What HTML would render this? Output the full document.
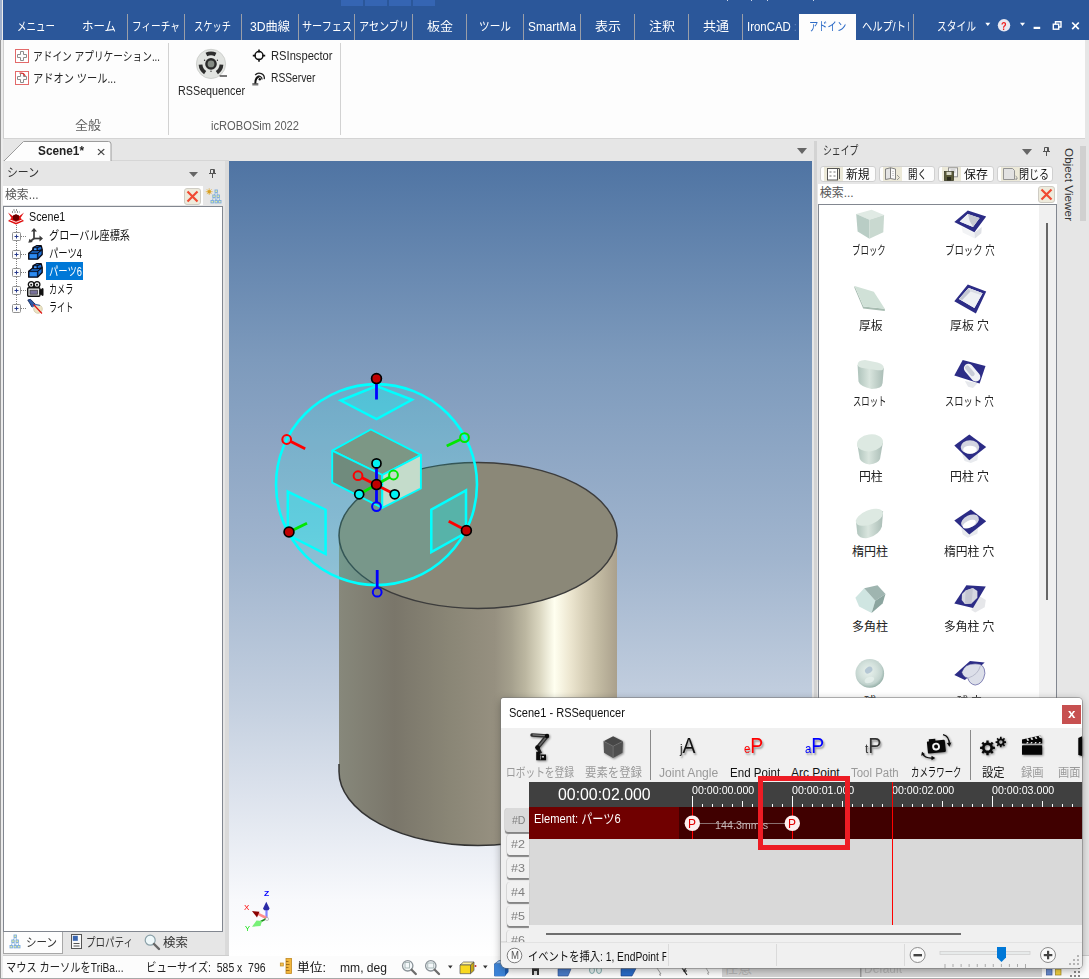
<!DOCTYPE html>
<html lang="ja"><head><meta charset="utf-8"><title>IronCAD - RSSequencer</title>
<style>
html,body{margin:0;padding:0;}
body{width:1089px;height:979px;overflow:hidden;position:relative;background:#e6e6e6;font-family:"Liberation Sans","Noto Sans CJK JP",sans-serif;font-size:12px;}
.a{position:absolute;}
.t{position:absolute;white-space:pre;transform-origin:0 50%;display:block;}
svg{position:absolute;overflow:visible;}

</style></head>
<body>
<div class="a" style="left:0;top:0;width:1089px;height:40px;background:#2b579a"></div>
<div class="a" style="left:341px;top:0;width:22px;height:6px;background:#3565b3"></div>
<div class="a" style="left:365px;top:0;width:22px;height:6px;background:#3565b3"></div>
<div class="a" style="left:389px;top:0;width:22px;height:6px;background:#3565b3"></div>
<div class="a" style="left:413px;top:0;width:22px;height:6px;background:#3565b3"></div>
<div class="a" style="left:727px;top:0;width:1px;height:1px;background:#c8d4ea"></div>
<div class="a" style="left:751px;top:0;width:1px;height:1px;background:#c8d4ea"></div>
<div class="a" style="left:767px;top:0;width:1px;height:1px;background:#c8d4ea"></div>
<div class="a" style="left:813px;top:0;width:1px;height:1px;background:#c8d4ea"></div>
<div class="a" style="left:0;top:0;width:3px;height:979px;background:#ececec"></div>
<div class="a" style="left:0;top:0;width:1px;height:979px;background:#969696"></div>
<div class="a" style="left:0;top:0;width:2px;height:40px;background:#9fb0cc"></div>
<div class="a" style="left:799px;top:14px;width:57px;height:27px;background:#fdfdfd"></div>
<div class="a" style="left:127px;top:14px;width:1px;height:26px;background:#9a9ea8"></div>
<div class="a" style="left:184px;top:14px;width:1px;height:26px;background:#9a9ea8"></div>
<div class="a" style="left:241px;top:14px;width:1px;height:26px;background:#9a9ea8"></div>
<div class="a" style="left:298px;top:14px;width:1px;height:26px;background:#9a9ea8"></div>
<div class="a" style="left:354px;top:14px;width:1px;height:26px;background:#9a9ea8"></div>
<div class="a" style="left:412px;top:14px;width:1px;height:26px;background:#9a9ea8"></div>
<div class="a" style="left:466px;top:14px;width:1px;height:26px;background:#9a9ea8"></div>
<div class="a" style="left:523px;top:14px;width:1px;height:26px;background:#9a9ea8"></div>
<div class="a" style="left:580px;top:14px;width:1px;height:26px;background:#9a9ea8"></div>
<div class="a" style="left:634px;top:14px;width:1px;height:26px;background:#9a9ea8"></div>
<div class="a" style="left:688px;top:14px;width:1px;height:26px;background:#9a9ea8"></div>
<div class="a" style="left:742px;top:14px;width:1px;height:26px;background:#9a9ea8"></div>
<div class="a" style="left:913px;top:14px;width:1px;height:26px;background:#9a9ea8"></div>
<span id="t1" class="t" style="left:17.0px;top:19.0px;font-size:12px;line-height:17px;color:#fff;transform:scaleX(0.7914);">メニュー</span>
<span id="t2" class="t" style="left:82.0px;top:19.0px;font-size:12px;line-height:17px;color:#fff;transform:scaleX(0.9540);">ホーム</span>
<span id="t3" class="t" style="left:132.0px;top:19.0px;font-size:12px;line-height:17px;color:#fff;transform:scaleX(0.8048);">フィーチャ</span>
<span id="t4" class="t" style="left:194.0px;top:19.0px;font-size:12px;line-height:17px;color:#fff;transform:scaleX(0.7706);">スケッチ</span>
<span id="t5" class="t" style="left:250.0px;top:19.0px;font-size:12px;line-height:17px;color:#fff;transform:scaleX(1.0167);">3D曲線</span>
<span id="t6" class="t" style="left:302.0px;top:19.0px;font-size:12px;line-height:17px;color:#fff;transform:scaleX(0.8434);">サーフェス</span>
<span id="t7" class="t" style="left:359.0px;top:19.0px;font-size:12px;line-height:17px;color:#fff;transform:scaleX(0.8417);">アセンブリ</span>
<span id="t8" class="t" style="left:427.0px;top:19.0px;font-size:12px;line-height:17px;color:#fff;transform:scaleX(1.0826);">板金</span>
<span id="t9" class="t" style="left:479.0px;top:19.0px;font-size:12px;line-height:17px;color:#fff;transform:scaleX(0.8885);">ツール</span>
<span id="t10" class="t" style="left:528.0px;top:19.0px;font-size:12px;line-height:17px;color:#fff;transform:scaleX(0.9859);">SmartMa</span>
<span id="t11" class="t" style="left:595.0px;top:19.0px;font-size:12px;line-height:17px;color:#fff;transform:scaleX(1.0826);">表示</span>
<span id="t12" class="t" style="left:649.0px;top:19.0px;font-size:12px;line-height:17px;color:#fff;transform:scaleX(1.0826);">注釈</span>
<span id="t13" class="t" style="left:703.0px;top:19.0px;font-size:12px;line-height:17px;color:#fff;transform:scaleX(1.0826);">共通</span>
<span id="t14" class="t" style="left:747.4px;top:19.0px;font-size:12px;line-height:17px;color:#fff;transform:scaleX(0.9519);">IronCAD</span>
<span id="t15" class="t" style="left:809.4px;top:19.0px;font-size:12px;line-height:17px;color:#2b6ac6;transform:scaleX(0.7747);">アドイン</span>
<span id="t16" class="t" style="left:861.5px;top:19.0px;font-size:12px;line-height:17px;color:#fff;transform:scaleX(0.8570);">ヘルプ/ト</span>
<span id="t17" class="t" style="left:906.3px;top:19.0px;font-size:12px;line-height:17px;color:#fff;transform:scaleX(0.8739);clip-path:inset(0 8.6px 0 0);">レ</span>
<span id="t18" class="t" style="left:794.0px;top:19.0px;font-size:12px;line-height:17px;color:#6a8bc2;transform:scaleX(0.7477);">:</span>
<span id="t19" class="t" style="left:937.0px;top:19.0px;font-size:12px;line-height:17px;color:#fff;transform:scaleX(0.8122);">スタイル</span>
<div class="a" style="left:3px;top:40px;width:1082px;height:98.5px;background:#fdfdfd;border-left:1px solid #cfcfcf;border-bottom:1px solid #d4d4d4;box-sizing:border-box"></div>
<div class="a" style="left:168px;top:43px;width:1px;height:92px;background:#d2d2d2"></div>
<div class="a" style="left:340px;top:43px;width:1px;height:92px;background:#d2d2d2"></div>
<span id="t20" class="t" style="left:33.0px;top:48.5px;font-size:12px;line-height:17px;color:#262626;transform:scaleX(0.8084);">アドイン アプリケーション...</span>
<span id="t21" class="t" style="left:33.0px;top:71.0px;font-size:12px;line-height:17px;color:#262626;transform:scaleX(0.8526);">アドオン ツール...</span>
<span id="t22" class="t" style="left:74.5px;top:118.0px;font-size:12px;line-height:17px;color:#5e5e5e;transform:scaleX(1.0826);">全般</span>
<span id="t23" class="t" style="left:178.0px;top:83.1px;font-size:12px;line-height:17px;color:#262626;transform:scaleX(0.8967);">RSSequencer</span>
<span id="t24" class="t" style="left:270.5px;top:47.6px;font-size:12px;line-height:17px;color:#262626;transform:scaleX(0.9314);">RSInspector</span>
<span id="t25" class="t" style="left:270.5px;top:70.1px;font-size:12px;line-height:17px;color:#262626;transform:scaleX(0.8555);">RSServer</span>
<span id="t26" class="t" style="left:211.0px;top:118.0px;font-size:12px;line-height:17px;color:#5e5e5e;transform:scaleX(0.9292);">icROBOSim 2022</span>
<div class="a" style="left:3px;top:160px;width:226px;height:1px;background:#d6d6d6"></div>
<svg style="left:0;top:138px" width="240" height="24"><path d="M4,23 L23.500,3.500 L108.500,3.500 Q111,3.500 111,6 L111,23 Z" fill="#fdfdfd"/><path d="M4,23 L23.500,3.500 L108.500,3.500 Q111,3.500 111,6 L111,23" fill="none" stroke="#9c9c9c" stroke-width="1"/></svg>
<span id="t27" class="t" style="left:38.0px;top:142.8px;font-size:12px;line-height:17px;color:#222;font-weight:bold;transform:scaleX(0.9849);">Scene1*</span>
<span id="t28" class="t" style="left:96.0px;top:144.5px;font-size:11px;line-height:15px;color:#444;transform:scaleX(1.1111);">✕</span>
<div class="a" style="left:225px;top:161px;width:3.5px;height:794px;background:#dadada"></div>
<div class="a" style="left:814px;top:141px;width:2.7px;height:814px;background:#d3d3d3"></div>
<span id="t29" class="t" style="left:7.0px;top:165.0px;font-size:12px;line-height:17px;color:#333;transform:scaleX(0.9038);">シーン</span>
<div class="a" style="left:3px;top:186px;width:200px;height:19px;background:#fff"></div>
<span id="t30" class="t" style="left:5.0px;top:187.0px;font-size:12px;line-height:17px;color:#555;transform:scaleX(0.9848);">検索...</span>
<div class="a" style="left:3px;top:206px;width:220px;height:726px;background:#fff;border:1px solid #828790;box-sizing:border-box"></div>
<span id="t31" class="t" style="left:29.3px;top:209.3px;font-size:12px;line-height:17px;color:#111;transform:scaleX(0.8918);">Scene1</span>
<span id="t32" class="t" style="left:48.5px;top:227.8px;font-size:12px;line-height:17px;color:#111;transform:scaleX(0.8447);">グローバル座標系</span>
<span id="t33" class="t" style="left:48.5px;top:245.8px;font-size:12px;line-height:17px;color:#111;transform:scaleX(0.7776);">パーツ4</span>
<div class="a" style="left:46px;top:262px;width:37px;height:18px;background:#0078d7"></div>
<span id="t34" class="t" style="left:48.5px;top:263.8px;font-size:12px;line-height:17px;color:#fff;transform:scaleX(0.7776);">パーツ6</span>
<span id="t35" class="t" style="left:48.5px;top:281.6px;font-size:12px;line-height:17px;color:#111;transform:scaleX(0.6719);">カメラ</span>
<span id="t36" class="t" style="left:48.5px;top:299.6px;font-size:12px;line-height:17px;color:#111;transform:scaleX(0.6719);">ライト</span>
<div class="a" style="left:3px;top:932px;width:60px;height:21.5px;background:#fdfdfd;border:1px solid #a8a8a8;border-top:none;box-sizing:border-box"></div>
<span id="t37" class="t" style="left:25.8px;top:934.6px;font-size:12px;line-height:17px;color:#333;transform:scaleX(0.8756);">シーン</span>
<span id="t38" class="t" style="left:86.0px;top:934.6px;font-size:12px;line-height:17px;color:#333;transform:scaleX(0.7928);">プロパティ</span>
<span id="t39" class="t" style="left:163.0px;top:934.6px;font-size:12px;line-height:17px;color:#333;transform:scaleX(1.0410);">検索</span>
<div class="a" style="left:3px;top:955px;width:1086px;height:1px;background:#cdcdcd"></div>
<div class="a" style="left:3px;top:956px;width:1086px;height:22px;background:#fcfcfc"></div>
<div class="a" style="left:0;top:977.500px;width:1089px;height:1.500px;background:#a8a8a8"></div>
<span id="t40" class="t" style="left:5.5px;top:960.0px;font-size:12px;line-height:17px;color:#222;transform:scaleX(0.8542);">マウス カーソルをTriBa...</span>
<span id="t41" class="t" style="left:146.0px;top:960.0px;font-size:12px;line-height:17px;color:#222;transform:scaleX(0.8694);">ビューサイズ:  585 x  796</span>
<span id="t42" class="t" style="left:297.0px;top:960.0px;font-size:12px;line-height:17px;color:#111;transform:scaleX(1.0606);">単位:</span>
<span id="t43" class="t" style="left:339.5px;top:960.0px;font-size:12px;line-height:17px;color:#222;transform:scaleX(1.0067);">mm, deg</span>
<svg style="left:229px;top:161px" width="583" height="795" viewBox="229 161 583 795">
<defs>
<linearGradient id="bg" x1="0" y1="0" x2="0" y2="1">
<stop offset="0" stop-color="#4f74a3"/><stop offset="0.25" stop-color="#7d9abc"/><stop offset="0.5" stop-color="#a1b5ce"/><stop offset="0.68" stop-color="#c3cfdf"/><stop offset="0.8" stop-color="#dde3ed"/><stop offset="0.93" stop-color="#f8f9fc"/><stop offset="1" stop-color="#ffffff"/>
</linearGradient>
<linearGradient id="cyl" x1="0" y1="0" x2="1" y2="0">
<stop offset="0" stop-color="#87887b"/><stop offset="0.2" stop-color="#7a766a"/><stop offset="0.4" stop-color="#8a8676"/><stop offset="0.56" stop-color="#969080"/><stop offset="0.62" stop-color="#a5a08d"/><stop offset="0.67" stop-color="#bbb6a0"/><stop offset="0.72" stop-color="#d9d5bf"/><stop offset="0.775" stop-color="#fffff0"/><stop offset="0.83" stop-color="#ede7d1"/><stop offset="0.88" stop-color="#d8d0b8"/><stop offset="0.94" stop-color="#c0b8a0"/><stop offset="1" stop-color="#aaa08c"/>
</linearGradient>
</defs>
<rect x="229" y="161" width="583" height="795" fill="url(#bg)"/>
<path d="M339,535.500 L339,771.500 A139,74 0 0 0 617,771.500 L617,535.500 Z" fill="url(#cyl)"/>
<path d="M339,764 L339,771.500 A139,74 0 0 0 617,771.500" fill="none" stroke="#333" stroke-width="1.500"/>
<ellipse cx="478" cy="535.500" rx="139" ry="73" fill="#8b8878" stroke="#3c3c3c" stroke-width="1.500"/>
<!-- small block -->
<g stroke="#00ffff" stroke-width="1.900" stroke-linejoin="round">
<polygon points="332.200,450.700 370.800,429.500 420.900,454.900 382.300,475" fill="#8f8773"/>
<polygon points="332.200,450.700 382.300,475 382.300,507.800 332.200,482.700" fill="#827a6a"/>
<polygon points="382.300,475 420.900,454.900 420.900,488.500 382.300,507.800" fill="#e3d7c4"/>
</g>
<!-- triball sphere -->
<circle cx="376.500" cy="484.600" r="100.500" fill="#00ffff" fill-opacity="0.135" stroke="#00ffff" stroke-width="2.600"/>
<g stroke="#00ffff" stroke-width="2.500" fill="#00ffff" fill-opacity="0.27" stroke-linejoin="miter">
<polygon points="340.700,400.500 376.500,386 412,399.800 376.500,419"/>
<polygon points="287.800,491.600 325.600,509.700 325.600,554 287.800,534.800"/>
<polygon points="431.300,509.700 466,490.400 466,532.800 431.300,552.100"/>
</g>
<g stroke-width="2.800" stroke-linecap="butt" fill="none">
<line x1="376.5" y1="379.0" x2="376.5" y2="399.5" stroke="#0000ff"/>
<line x1="377.2" y1="587.6" x2="377.2" y2="570.0" stroke="#0000ff"/>
<line x1="290.8" y1="441.6" x2="305.2" y2="448.8" stroke="#ff0000"/>
<line x1="460.3" y1="439.6" x2="446.7" y2="446.0" stroke="#00e800"/>
<line x1="289.0" y1="532.0" x2="307.0" y2="523.2" stroke="#00e800"/>
<line x1="466.4" y1="530.5" x2="448.7" y2="521.3" stroke="#ff0000"/>
<line x1="376.5" y1="463.4" x2="376.5" y2="502.0" stroke="#0000ff"/>
<line x1="362.1" y1="477.8" x2="394.7" y2="494.3" stroke="#ff0000"/>
<line x1="389.5" y1="477.3" x2="359.2" y2="494.3" stroke="#00e800"/>
</g>
<g stroke="#000" stroke-width="1.700" fill="#c00000">
<circle cx="376.5" cy="378.6" r="4.900"/>
<circle cx="289.0" cy="532.0" r="4.900"/>
<circle cx="466.4" cy="530.5" r="4.900"/>
<circle cx="376.5" cy="484.6" r="4.900"/>
</g>
<g stroke="#000" stroke-width="1.700" fill="#00f4f4">
<circle cx="376.5" cy="463.4" r="4.500"/>
<circle cx="359.2" cy="494.3" r="4.500"/>
<circle cx="394.7" cy="494.3" r="4.500"/>
</g>
<g stroke-width="2" fill="none">
<circle cx="286.7" cy="439.5" r="4.400" stroke="#ff0000"/>
<circle cx="464.5" cy="437.6" r="4.400" stroke="#00e800"/>
<circle cx="377.2" cy="592.2" r="4.400" stroke="#0000ff"/>
<circle cx="358.0" cy="475.7" r="4.400" stroke="#ff0000"/>
<circle cx="393.5" cy="475.0" r="4.400" stroke="#00e800"/>
<circle cx="376.5" cy="506.6" r="4.400" stroke="#0000ff"/>
</g>
</svg>
<svg style="left:797px;top:148px" width="10" height="6"><path d="M0,0 L10,0 L5,6 Z" fill="#666"/></svg>
<span id="t44" class="t" style="left:823.0px;top:142.5px;font-size:12px;line-height:17px;color:#333;transform:scaleX(0.7393);">シェイプ</span>
<svg style="left:1022px;top:149px" width="10" height="6"><path d="M0,0 L10,0 L5,6 Z" fill="#666"/></svg>
<div class="a" style="left:820px;top:166px;width:56px;height:16px;background:#fdfdfd;border:1px solid #d0d0d0;border-radius:3px;box-sizing:border-box"></div>
<div class="a" style="left:824px;top:167px;width:19px;height:14px;background:#ece9d8"></div>
<span id="t45" class="t" style="left:846.0px;top:166.8px;font-size:12px;line-height:17px;color:#111;transform:scaleX(0.9869);">新規</span>
<div class="a" style="left:879px;top:166px;width:56px;height:16px;background:#fdfdfd;border:1px solid #d0d0d0;border-radius:3px;box-sizing:border-box"></div>
<div class="a" style="left:883px;top:167px;width:19px;height:14px;background:#ece9d8"></div>
<span id="t46" class="t" style="left:907.6px;top:166.8px;font-size:12px;line-height:17px;color:#111;transform:scaleX(0.7870);">開く</span>
<div class="a" style="left:938px;top:166px;width:56px;height:16px;background:#fdfdfd;border:1px solid #d0d0d0;border-radius:3px;box-sizing:border-box"></div>
<div class="a" style="left:942px;top:167px;width:19px;height:14px;background:#ece9d8"></div>
<span id="t47" class="t" style="left:964.0px;top:166.8px;font-size:12px;line-height:17px;color:#111;transform:scaleX(0.9910);">保存</span>
<div class="a" style="left:997px;top:166px;width:56px;height:16px;background:#fdfdfd;border:1px solid #d0d0d0;border-radius:3px;box-sizing:border-box"></div>
<div class="a" style="left:1001px;top:167px;width:19px;height:14px;background:#ece9d8"></div>
<span id="t48" class="t" style="left:1019.4px;top:166.8px;font-size:12px;line-height:17px;color:#111;transform:scaleX(0.8385);">閉じる</span>
<div class="a" style="left:818px;top:184px;width:239px;height:20px;background:#fff"></div>
<span id="t49" class="t" style="left:819.7px;top:184.8px;font-size:12px;line-height:17px;color:#555;">検索...</span>
<div class="a" style="left:818px;top:204px;width:239px;height:500px;background:#fff;border:1px solid #828790;box-sizing:border-box"></div>
<div class="a" style="left:1039px;top:205px;width:17px;height:498px;background:#f0f0f0"></div>
<div class="a" style="left:1046px;top:223px;width:2px;height:377px;background:#666"></div>
<span id="t50" class="t" style="left:852.2px;top:243.3px;font-size:12px;line-height:17px;color:#222;transform:scaleX(0.7039);">ブロック</span>
<span id="t51" class="t" style="left:945.0px;top:243.3px;font-size:12px;line-height:17px;color:#222;transform:scaleX(0.7830);">ブロック 穴</span>
<span id="t52" class="t" style="left:858.5px;top:318.4px;font-size:12px;line-height:17px;color:#222;transform:scaleX(0.9869);">厚板</span>
<span id="t53" class="t" style="left:950.0px;top:318.4px;font-size:12px;line-height:17px;color:#222;transform:scaleX(0.9913);">厚板 穴</span>
<span id="t54" class="t" style="left:853.0px;top:393.5px;font-size:12px;line-height:17px;color:#222;transform:scaleX(0.6977);">スロット</span>
<span id="t55" class="t" style="left:945.0px;top:393.5px;font-size:12px;line-height:17px;color:#222;transform:scaleX(0.7704);">スロット 穴</span>
<span id="t56" class="t" style="left:858.5px;top:468.6px;font-size:12px;line-height:17px;color:#222;transform:scaleX(0.9869);">円柱</span>
<span id="t57" class="t" style="left:950.0px;top:468.6px;font-size:12px;line-height:17px;color:#222;transform:scaleX(0.9913);">円柱 穴</span>
<span id="t58" class="t" style="left:852.0px;top:543.7px;font-size:12px;line-height:17px;color:#222;">楕円柱</span>
<span id="t59" class="t" style="left:944.3px;top:543.7px;font-size:12px;line-height:17px;color:#222;transform:scaleX(0.9797);">楕円柱 穴</span>
<span id="t60" class="t" style="left:852.0px;top:618.8px;font-size:12px;line-height:17px;color:#222;">多角柱</span>
<span id="t61" class="t" style="left:944.3px;top:618.8px;font-size:12px;line-height:17px;color:#222;transform:scaleX(0.9797);">多角柱 穴</span>
<span id="t62" class="t" style="left:864.0px;top:693.9px;font-size:12px;line-height:17px;color:#222;">球</span>
<span id="t63" class="t" style="left:957.0px;top:693.9px;font-size:12px;line-height:17px;color:#222;transform:scaleX(0.9143);">球 穴</span>
<div class="a" style="left:1080px;top:146px;width:5.5px;height:75px;background:#d0d0d0"></div>
<span class="t" id="ov" style="left:1076px;top:148px;font-size:11px;line-height:14px;color:#333;transform-origin:0 0;transform:rotate(90deg) scaleX(1.07)">Object Viewer</span>
<svg style="left:980px;top:14px" width="109" height="26" viewBox="980 14 109 26"><path d="M985.300,22.800 L990.300,22.800 L987.800,26 Z" fill="#fff"/><circle cx="1004" cy="25.300" r="6.200" fill="#e9e9f2"/><path d="M1020,22.800 L1025,22.800 L1022.500,26 Z" fill="#fff"/><rect x="1033.600" y="26.800" width="6.600" height="2.200" fill="#fff"/><path d="M1055.500,24 V21.700 H1061 V27 H1058.700" fill="none" stroke="#fff" stroke-width="1.400"/><rect x="1053.300" y="24.200" width="5.400" height="5" fill="none" stroke="#fff" stroke-width="1.400"/><path d="M1072.200,22.500 L1078.800,29.200 M1078.800,22.500 L1072.200,29.200" stroke="#fff" stroke-width="1.700" fill="none"/></svg>
<span id="t64" class="t" style="left:1001.2px;top:18.5px;font-size:11px;line-height:15px;color:#f02020;font-weight:bold;transform:scaleX(0.8316);">?</span>
<div class="a" style="left:1085px;top:40px;width:4px;height:99px;background:#e6e6e6"></div>
<svg style="left:15px;top:49px" width="14" height="14" viewBox="0 0 14 14"><rect x="0.500" y="0.500" width="13" height="13" fill="#fff" stroke="#e36a6a" stroke-width="1"/><path d="M5.500,2.500 H8.500 V5.500 H11.500 V8.500 H8.500 V11.500 H5.500 V8.500 H2.500 V5.500 H5.500 Z" fill="#fdfdfd" stroke="#8d8d8d" stroke-width="1"/></svg>
<svg style="left:15px;top:71px" width="14" height="14" viewBox="0 0 14 14"><rect x="0.500" y="0.500" width="13" height="13" fill="#fff" stroke="#e36a6a" stroke-width="1"/><path d="M5.500,2.500 H8.500 V5.500 H11.500 V8.500 H8.500 V11.500 H5.500 V8.500 H2.500 V5.500 H5.500 Z" fill="#fdfdfd" stroke="#8d8d8d" stroke-width="1"/><path d="M4.500,2.200 Q8.800,1.200 10.200,5" fill="none" stroke="#e03030" stroke-width="1.200"/></svg>
<svg style="left:194px;top:47px" width="36" height="34" viewBox="194 47 36 34"><circle cx="211" cy="63.900" r="14.600" fill="#e2e4e1" stroke="#cfd1ce" stroke-width="1"/><path d="M205.56,52.75 A12.40,12.40 0 0 1 216.44,52.75 L214.77,56.17 A8.60,8.60 0 0 0 207.23,56.17 Z" fill="#2e2e2e"/><path d="M223.37,64.76 A12.40,12.40 0 0 1 217.93,74.18 L215.81,71.03 A8.60,8.60 0 0 0 219.58,64.50 Z" fill="#2e2e2e"/><path d="M204.07,74.18 A12.40,12.40 0 0 1 198.63,64.76 L202.42,64.50 A8.60,8.60 0 0 0 206.19,71.03 Z" fill="#2e2e2e"/><circle cx="211" cy="63.900" r="5.800" fill="#2a2a2a"/><circle cx="211" cy="63.900" r="3.400" fill="#858b84"/><circle cx="217.41" cy="60.20" r="0.700" fill="#333"/><circle cx="211.00" cy="71.30" r="0.700" fill="#333"/><circle cx="204.59" cy="60.20" r="0.700" fill="#333"/><rect x="219.600" y="75.400" width="7.400" height="1.200" fill="#222"/></svg>
<svg style="left:252px;top:48px" width="15" height="15" viewBox="252 48 15 15"><circle cx="259" cy="55.600" r="4" fill="none" stroke="#111" stroke-width="1.500"/><path d="M259,49.400 V52.400 M259,58.800 V61.800 M252.800,55.600 H255.800 M262.200,55.600 H265.200" stroke="#111" stroke-width="1.600"/></svg>
<svg style="left:251px;top:70px" width="16" height="16" viewBox="251 70 16 16"><rect x="252.300" y="83" width="6" height="2.500" fill="#777"/><path d="M255.300,83.500 Q255.300,77 259.500,76.500" fill="none" stroke="#111" stroke-width="2"/><path d="M255.200,75 A5.200,5.200 0 0 1 264.300,79.200" fill="none" stroke="#222" stroke-width="1.300"/><path d="M257,77 A3,3 0 0 1 262,79.500" fill="none" stroke="#222" stroke-width="1.300"/><circle cx="259.800" cy="79.300" r="1.200" fill="#111"/></svg>
<svg style="left:189px;top:172px" width="9" height="5"><path d="M0,0 L9,0 L4.500,5 Z" fill="#666"/></svg>
<svg style="left:209px;top:169px" width="7" height="9" viewBox="0 0 7 9"><path d="M1.500,0.500 H5.500 V4.500 H1.500 Z M4.500,0.500 V4.500" fill="none" stroke="#555" stroke-width="1"/><path d="M0,4.500 H7" stroke="#555" stroke-width="1"/><path d="M3.500,4.500 V9" stroke="#555" stroke-width="1"/></svg>
<svg style="left:1043px;top:147px" width="7" height="9" viewBox="0 0 7 9"><path d="M1.500,0.500 H5.500 V4.500 H1.500 Z M4.500,0.500 V4.500" fill="none" stroke="#555" stroke-width="1"/><path d="M0,4.500 H7" stroke="#555" stroke-width="1"/><path d="M3.500,4.500 V9" stroke="#555" stroke-width="1"/></svg>
<svg style="left:184.0px;top:187.5px" width="17" height="17" viewBox="0 0 17 17"><rect x="0.500" y="0.500" width="16" height="16" rx="2.500" fill="#eeebdc" stroke="#cfccc4"/><path d="M3.500,3.500 L13.5,13.5 M13.5,3.500 L3.500,13.5" stroke="#f04a32" stroke-width="2.200" stroke-linecap="butt"/></svg>
<svg style="left:1038.3px;top:185.5px" width="17" height="17" viewBox="0 0 17 17"><rect x="0.500" y="0.500" width="16" height="16" rx="2.500" fill="#eeebdc" stroke="#cfccc4"/><path d="M3.500,3.500 L13.5,13.5 M13.5,3.500 L3.500,13.5" stroke="#f04a32" stroke-width="2.200" stroke-linecap="butt"/></svg>
<svg style="left:204.5px;top:188.0px" width="17" height="16" viewBox="0 0 17 16"><path d="M4.200,0.300 V7 M0.800,3.700 H7.600 M1.800,1.300 L6.600,6.100 M6.600,1.300 L1.800,6.100" stroke="#e2b040" stroke-width="0.800"/><circle cx="4.200" cy="3.700" r="1.700" fill="#d8a020"/><path d="M11.200,3.500 L9,7.500 L7.200,13 M11.200,3.500 L13.200,7.500 L15,13 M9,7.500 L11.200,13 M13.200,7.500 L11.200,13" fill="none" stroke="#8fb8e0" stroke-width="0.900"/><g fill="#e8f29a" stroke="#7aaade" stroke-width="0.900"><rect x="10" y="2" width="2.400" height="2.400"/><rect x="7.800" y="7" width="2.400" height="2.400"/><rect x="12" y="7" width="2.400" height="2.400"/><rect x="6" y="12.500" width="2.400" height="2.400"/><rect x="10" y="12.500" width="2.400" height="2.400"/><rect x="13.600" y="12.500" width="2.400" height="2.400"/></g></svg>
<svg style="left:10px;top:222px" width="20" height="92" viewBox="10 222 20 92"><path d="M16.500,225 V307" stroke="#808080" stroke-width="1" stroke-dasharray="1 1" fill="none"/><path d="M21,236.5 H27" stroke="#808080" stroke-width="1" stroke-dasharray="1 1"/><path d="M21,254.5 H27" stroke="#808080" stroke-width="1" stroke-dasharray="1 1"/><path d="M21,272.5 H27" stroke="#808080" stroke-width="1" stroke-dasharray="1 1"/><path d="M21,290.5 H27" stroke="#808080" stroke-width="1" stroke-dasharray="1 1"/><path d="M21,308.5 H27" stroke="#808080" stroke-width="1" stroke-dasharray="1 1"/></svg>
<svg style="left:12px;top:232px" width="9" height="9" viewBox="0 0 9 9"><rect x="0.500" y="0.500" width="8" height="8" rx="1" fill="#fcfcfc" stroke="#919191"/><path d="M2.500,4.500 H6.500 M4.500,2.500 V6.500" stroke="#2a3c8c" stroke-width="1"/></svg>
<svg style="left:12px;top:250px" width="9" height="9" viewBox="0 0 9 9"><rect x="0.500" y="0.500" width="8" height="8" rx="1" fill="#fcfcfc" stroke="#919191"/><path d="M2.500,4.500 H6.500 M4.500,2.500 V6.500" stroke="#2a3c8c" stroke-width="1"/></svg>
<svg style="left:12px;top:268px" width="9" height="9" viewBox="0 0 9 9"><rect x="0.500" y="0.500" width="8" height="8" rx="1" fill="#fcfcfc" stroke="#919191"/><path d="M2.500,4.500 H6.500 M4.500,2.500 V6.500" stroke="#2a3c8c" stroke-width="1"/></svg>
<svg style="left:12px;top:286px" width="9" height="9" viewBox="0 0 9 9"><rect x="0.500" y="0.500" width="8" height="8" rx="1" fill="#fcfcfc" stroke="#919191"/><path d="M2.500,4.500 H6.500 M4.500,2.500 V6.500" stroke="#2a3c8c" stroke-width="1"/></svg>
<svg style="left:12px;top:304px" width="9" height="9" viewBox="0 0 9 9"><rect x="0.500" y="0.500" width="8" height="8" rx="1" fill="#fcfcfc" stroke="#919191"/><path d="M2.500,4.500 H6.500 M4.500,2.500 V6.500" stroke="#2a3c8c" stroke-width="1"/></svg>
<svg style="left:7px;top:209px" width="18" height="16" viewBox="0 0 18 16"><path d="M6.500,1 H11.500 M5,3 H13" stroke="#222" stroke-width="1" stroke-dasharray="1 1.500"/><path d="M1,3.500 L5.500,7 L9,5.500 L12.500,7 L17,3.500 L13.500,9 L17,12 L9,15.500 L1,12 L4.500,9 Z" fill="#e01010"/><path d="M6,6.500 L9,5.200 L12,6.500 L12,10.500 L9,12 L6,10.500 Z" fill="#6a0000"/><path d="M2.500,10.700 L9,13.300 L15.500,10.700" stroke="#fff" stroke-width="0.900" fill="none"/></svg>
<svg style="left:27.500px;top:227.500px" width="15" height="15" viewBox="0 0 15 15"><g stroke="#3c3c3c" stroke-width="1.700" fill="none"><path d="M6,10.500 V2"/><path d="M6,10.500 H13"/><path d="M6,10.500 L2,13.500"/></g><path d="M6,0 L9,3.500 H3 Z M15,10.500 L11.500,7.500 V13.500 Z M0.300,14.800 L1.500,10.800 L4.800,14 Z" fill="#3c3c3c"/></svg>
<svg style="left:27.500px;top:245.0px" width="15" height="15" viewBox="0 0 15 15"><path d="M0.700,8.200 L4.700,5 L5.200,2.500 L8.500,0.700 L13.200,0.700 L14.200,4.500 L14.200,9.500 L9.500,14.200 L0.700,14.200 Z" fill="#1a6fd6" stroke="#0a0a14" stroke-width="1.300" stroke-linejoin="round"/><path d="M0.700,8.200 H9.800 L14.200,4.500 M9.800,8.200 V14 M5.200,2.800 L5.200,5.800 L9.200,5.800 L9.200,2.800 Z M9.200,2.800 L13,0.900 M9.200,5.800 L13.500,4.800" fill="none" stroke="#0a0a14" stroke-width="1.100" stroke-linejoin="round"/><path d="M2,9.500 H8.500 V13 H2 Z" fill="#2f8cf0"/><path d="M6.200,3.500 H8.300 V5 H6.200 Z" fill="#5aa8ff"/></svg>
<svg style="left:27.500px;top:263.0px" width="15" height="15" viewBox="0 0 15 15"><path d="M0.700,8.200 L4.700,5 L5.200,2.500 L8.500,0.700 L13.200,0.700 L14.200,4.500 L14.200,9.500 L9.500,14.200 L0.700,14.200 Z" fill="#1a6fd6" stroke="#0a0a14" stroke-width="1.300" stroke-linejoin="round"/><path d="M0.700,8.200 H9.800 L14.200,4.500 M9.800,8.200 V14 M5.200,2.800 L5.200,5.800 L9.200,5.800 L9.200,2.800 Z M9.200,2.800 L13,0.900 M9.200,5.800 L13.500,4.800" fill="none" stroke="#0a0a14" stroke-width="1.100" stroke-linejoin="round"/><path d="M2,9.500 H8.500 V13 H2 Z" fill="#2f8cf0"/><path d="M6.200,3.500 H8.300 V5 H6.200 Z" fill="#5aa8ff"/></svg>
<svg style="left:27px;top:281px" width="17" height="16" viewBox="0 0 17 16"><circle cx="4.200" cy="3.500" r="2.900" fill="#f2f2f2" stroke="#111" stroke-width="1.300"/><circle cx="10" cy="3.500" r="2.900" fill="#f2f2f2" stroke="#111" stroke-width="1.300"/><circle cx="4.200" cy="3.700" r="1" fill="#111"/><circle cx="10" cy="3.700" r="1" fill="#111"/><rect x="0.700" y="6.700" width="12.200" height="8.600" rx="1" fill="#e8e8e8" stroke="#111" stroke-width="1.400"/><rect x="3" y="9.200" width="7.500" height="4" fill="#77709a" stroke="#444" stroke-width="0.800"/><path d="M13,9 L16,7.500 V14.500 L13,13 Z" fill="#111" stroke="#111" stroke-width="1"/></svg>
<svg style="left:27px;top:299px" width="16" height="15" viewBox="0 0 16 15"><circle cx="11" cy="10" r="4.300" fill="#ece4c4" stroke="#d0c8a8" stroke-width="0.800"/><path d="M0.800,1 L3.500,0.300 L8.500,5.500 L5,8 Z" fill="#2a5aa8" stroke="#1a2a5a" stroke-width="0.900"/><path d="M5,8 L8.500,5.500 L13,6.500" fill="none" stroke="#3a6ab8" stroke-width="1.200"/><path d="M6.500,5.500 L15,14.500" stroke="#e01010" stroke-width="1.100"/></svg>
<svg style="left:4.0px;top:933.0px" width="17" height="16" viewBox="0 0 17 16"><path d="M11.200,3.500 L9,7.500 L7.200,13 M11.200,3.500 L13.200,7.500 L15,13 M9,7.500 L11.200,13 M13.200,7.500 L11.200,13" fill="none" stroke="#8fb8e0" stroke-width="0.900"/><g fill="#e8f29a" stroke="#7aaade" stroke-width="0.900"><rect x="10" y="2" width="2.400" height="2.400"/><rect x="7.800" y="7" width="2.400" height="2.400"/><rect x="12" y="7" width="2.400" height="2.400"/><rect x="6" y="12.500" width="2.400" height="2.400"/><rect x="10" y="12.500" width="2.400" height="2.400"/><rect x="13.600" y="12.500" width="2.400" height="2.400"/></g></svg>
<svg style="left:71px;top:934px" width="11" height="15" viewBox="0 0 11 15"><rect x="0.500" y="0.500" width="10" height="14" fill="#fafafa" stroke="#555"/><rect x="1.800" y="1.800" width="5" height="5" fill="#3a66b0"/><path d="M3,9.500 H8.500 M3,12 H8.500" stroke="#555" stroke-width="1"/><path d="M2,9.500 h0.500 M2,12 h0.500" stroke="#555"/></svg>
<svg style="left:144px;top:934px" width="17" height="16" viewBox="0 0 17 16"><circle cx="6.200" cy="6.200" r="5" fill="#eef8fa" stroke="#8aa0a8" stroke-width="1.200"/><path d="M10,10 L15,15" stroke="#666" stroke-width="2.400" stroke-linecap="round"/></svg>
<svg style="left:824px;top:167px" width="19" height="14" viewBox="0 0 19 14"><rect x="3.500" y="1.500" width="10" height="11.500" fill="#fff" stroke="#555" stroke-width="1"/><path d="M13.500,1.500 H15.500 V12" fill="none" stroke="#555"/><g fill="#b8b8b8"><rect x="5.500" y="4" width="2" height="2"/><rect x="9.500" y="4" width="2" height="2"/><rect x="5.500" y="8" width="2" height="2"/><rect x="9.500" y="8" width="2" height="2"/></g></svg>
<svg style="left:883px;top:167px" width="19" height="14" viewBox="0 0 19 14"><path d="M2.500,2 L7.500,0.800 V11.500 L2.500,12.500 Z" fill="#e4e4e4" stroke="#777" stroke-width="0.900"/><path d="M7.500,0.800 L12.500,2 V12.500 L7.500,11.500 Z" fill="#fafafa" stroke="#777" stroke-width="0.900"/><path d="M10,4 V10" stroke="#aaa" stroke-dasharray="1 1"/><path d="M14,8 L16.500,10.500 L14,13" fill="none" stroke="#999" stroke-width="1"/></svg>
<svg style="left:942px;top:167px" width="19" height="14" viewBox="0 0 19 14"><rect x="6.500" y="0.800" width="9" height="9" fill="#f4f4f4" stroke="#888" stroke-width="0.900"/><path d="M8.500,3 H13.500 M8.500,5 H13.500" stroke="#bbb"/><rect x="2.500" y="4.500" width="9" height="9" fill="#5a5a38" stroke="#3c3c28" stroke-width="0.800"/><rect x="4.500" y="4.800" width="5" height="3.200" fill="#d8d8c8"/><rect x="5" y="10" width="4" height="3.500" fill="#2a2a1c"/></svg>
<svg style="left:1001px;top:167px" width="19" height="14" viewBox="0 0 19 14"><path d="M2.500,1.500 H11.500 L13.500,3.500 V12.500 H2.500 Z" fill="#e2e2e2" stroke="#8a8a8a" stroke-width="0.900"/><path d="M14.500,9 Q17,9.500 15.500,12.500 M15.500,12.500 l-1.500,-0.500 M15.500,12.500 l0.800,-1.400" fill="none" stroke="#999" stroke-width="0.900"/></svg>
<svg style="left:819px;top:205px" width="220" height="499" viewBox="819 205 220 499"><defs><linearGradient id="gcy" x1="0" y1="0" x2="1" y2="0"><stop offset="0" stop-color="#aec3bb"/><stop offset="0.45" stop-color="#d9e5de"/><stop offset="1" stop-color="#aabdb6"/></linearGradient><radialGradient id="gsp" cx="0.45" cy="0.42" r="0.6"><stop offset="0" stop-color="#e9f2ee"/><stop offset="0.5" stop-color="#d3e1dc"/><stop offset="0.78" stop-color="#c2d3ce"/><stop offset="0.92" stop-color="#a3bbb4"/><stop offset="1" stop-color="#8ea8a0"/></radialGradient></defs><polygon points="856.2,214.1 871.6,209.7 884.1,215.0 869.4,219.7" fill="#e0eae4" /><polygon points="856.2,214.1 869.4,219.7 869.4,238.8 857.6,231.4" fill="#b9cdc5" /><polygon points="869.4,219.7 884.1,215.0 883.3,232.2 869.4,238.8" fill="#c9d9d0" /><polygon points="961.7,227.0 974.4,232.6 974.9,238.5 962.7,232.6" fill="#f2f3f5" /><polygon points="974.4,232.6 981.8,227.0 981.3,233.2 974.9,238.5" fill="#dfe1e6" /><path d="M967.8,210.6 L986.2,216.5 L974.4,232.2 L954.3,221.9 Z M967.8,214.1 L979.6,217.9 L973.0,227.0 L959.7,221.5 Z" fill="#2c2c86" fill-rule="evenodd"/><polygon points="959.7,221.5 967.8,214.1 969.6,220.9 973.0,227.0" fill="#eceef2" /><polygon points="967.8,214.1 979.6,217.9 973.0,227.0 969.6,220.9" fill="#c6c8d2" /><polygon points="854.7,285.9 863.5,306.4 884.8,308.7 884.8,310.9 863.2,308.5 854.3,287.6" fill="#a7bcb1" /><polygon points="854.7,285.9 873.8,291.8 884.8,308.7 863.5,306.4" fill="#d0e1d7" /><path d="M967.8,284.4 L986.2,291.5 L975.9,313.5 L954.3,301.3 Z M968.6,288.1 L982.5,293.2 L974.4,307.9 L959.0,299.1 Z" fill="#2c2c86" fill-rule="evenodd"/><polygon points="968.6,288.1 982.5,293.2 974.4,307.9 959.0,299.1" fill="#eef0f4" /><polygon points="959.0,299.1 968.6,288.1 970.5,291.5 962.2,300.0" fill="#c4c7d2" /><polygon points="968.6,288.1 982.5,293.2 980.8,295.0 970.5,291.5" fill="#d9dce4" /><path d="M 857.6,364.9 L 858.5,381.4 Q 859.8,386.1 871.6,389.0 Q 882.3,388.7 882.6,382.9 L 883.8,367.9 Z" fill="url(#gcy)" /><path d="M 857.6,364.5 Q 857.6,360.5 865.0,360.1 L 877.5,362.6 Q 883.8,364.5 883.8,367.9 Q 883.5,371.4 876.0,369.9 L 864.2,368.2 Q 857.6,367.7 857.6,364.5 Z" fill="#dce8e1" /><polygon points="964.9,381.1 977.8,382.9 973.0,388.0 968.1,386.7" fill="#e6e8ec" /><polygon points="962.7,360.1 985.5,366.0 979.6,383.6 954.3,375.5" fill="#2c2c86" /><line x1="968.4" y1="368.2" x2="975.8" y2="377.0" stroke="#f1f2f6" stroke-width="9.1" stroke-linecap="round"/><line x1="967.2" y1="367.6" x2="972.5" y2="374.0" stroke="#c9ccd8" stroke-width="4.4" stroke-linecap="round"/><path d="M 857.2,443.4 L 859.8,459.1 Q 862.0,463.5 869.4,464.4 Q 878.5,463.5 880.0,459.1 L 882.9,442.6 Z" fill="url(#gcy)" /><ellipse cx="870.0" cy="442.9" rx="13.1" ry="8.4" fill="#dde9e2" transform="rotate(-8 870.0 442.9)"/><polygon points="962.0,453.7 978.1,453.7 977.4,460.3 970.8,462.9 964.6,461.0" fill="#e8eaee" /><polygon points="969.3,434.6 986.2,447.0 969.3,460.3 954.3,445.6" fill="#2c2c86" /><ellipse cx="970.0" cy="447.0" rx="9.3" ry="6.8" fill="#d2d4e0"/><ellipse cx="970.0" cy="449.7" rx="6.8" ry="4.0" fill="#ffffff"/><path d="M 855.9,520.5 L 857.3,533.7 Q 859.8,538.9 867.9,538.1 Q 879.7,534.5 881.9,526.4 L 883.1,511.0 Z" fill="url(#gcy)" /><ellipse cx="869.4" cy="517.3" rx="14.3" ry="7.1" fill="#dde9e2" transform="rotate(-22 869.4 517.3)"/><polygon points="961.2,527.9 978.1,526.4 977.4,533.7 967.8,537.8 962.7,534.5" fill="#e8eaee" /><polygon points="970.8,509.5 986.2,521.2 969.3,534.5 954.3,520.5" fill="#2c2c86" /><ellipse cx="970.0" cy="521.2" rx="9.4" ry="5.9" fill="#d2d4e0" transform="rotate(-25 970.0 521.2)"/><ellipse cx="969.3" cy="524.2" rx="7.1" ry="3.5" fill="#ffffff" transform="rotate(-25 969.3 524.2)"/><polygon points="855.4,597.7 864.2,588.2 875.3,600.7 871.6,613.1 859.1,606.5" fill="#cfe5e1" /><polygon points="864.2,588.2 877.5,585.2 885.5,594.0 875.3,600.7" fill="#9fb5b0" /><polygon points="875.3,600.7 885.5,594.0 882.6,603.6 871.6,613.1" fill="#8ba59f" /><polygon points="979.6,596.2 985.8,599.9 984.7,607.3 975.2,612.4 971.2,609.9" fill="#e6e7ea" /><polygon points="966.4,585.2 985.8,586.4 973.0,608.0 954.3,603.6" fill="#2c2c86" /><polygon points="965.6,590.4 973.0,587.9 977.4,591.1 977.4,597.7 971.5,603.6 964.9,604.0 961.7,599.9 962.0,594.0" fill="#d6d8e0" /><polygon points="965.6,590.4 973.0,587.9 971.5,603.6 964.9,604.0" fill="#c4c6d2" /><circle cx="869.8" cy="673.4" r="14.3" fill="url(#gsp)"/><ellipse cx="868.7" cy="670.1" rx="4" ry="3" fill="#a4b9cc" opacity="0.75" transform="rotate(-35 868.7 670.1)"/><ellipse cx="869.4" cy="680.0" rx="5" ry="3" fill="#e6f0ec" opacity="0.8" transform="rotate(-20 869.4 680.0)"/><polygon points="970.0,660.9 984.7,662.4 964.9,680.0 954.3,674.9" fill="#2c2c86" /><path d="M 961.7,672.2 Q 964.9,663.4 975.2,663.8 Q 984.7,663.1 984.9,673.4 Q 983.3,684.0 975.2,685.1 Q 969.3,684.0 967.8,678.1 Q 963.1,677.2 961.7,672.2 Z" fill="#dcdfe9" stroke="#3a3a8c" stroke-width="0.600"/><path d="M 967.8,678.1 Q 978.1,674.9 980.3,666.0" fill="none" stroke="#b8bbcc" stroke-width="1"/></svg>
<svg style="left:240px;top:885px" width="40" height="50" viewBox="240 885 40 50"><path d="M266.500,918 V909" stroke="#8484ff" stroke-width="2.200"/><path d="M266.300,901.800 L269.600,908.500 L268.500,910.200 H264.200 L263,908.500 Z" fill="#2a2aa6"/><path d="M266.500,918 L258,913.800" stroke="#ff8c8c" stroke-width="2.600"/><path d="M252,911 L259.500,911.800 L257,917.500 Z" fill="#8a0000"/><path d="M266.500,918.500 L259,922.500" stroke="#1c8c1c" stroke-width="1.600"/><path d="M252,926.800 L256.500,920.500 L262,921 L260.500,926 Z" fill="#78f078"/><circle cx="267" cy="919" r="1.600" fill="#f4f4f4" stroke="#999" stroke-width="0.500"/></svg>
<span id="t65" class="t" style="left:263.8px;top:888.0px;font-size:8px;line-height:11px;color:#0000ff;font-weight:bold;transform:scaleX(1.0633);">Z</span>
<span id="t66" class="t" style="left:243.9px;top:901.8px;font-size:8px;line-height:11px;color:#ff0000;transform:scaleX(0.9918);">X</span>
<span id="t67" class="t" style="left:245.0px;top:922.8px;font-size:8px;line-height:11px;color:#00e000;transform:scaleX(0.9357);">Y</span>
<svg style="left:278px;top:957px" width="230" height="20" viewBox="278 957 230 20"><rect x="286" y="958.500" width="5.500" height="15" fill="#f2b63c" stroke="#c08820" stroke-width="0.800"/><path d="M286,961.500 h2.500 M286,964.500 h3.500 M286,967.500 h2.500 M286,970.500 h3.500" stroke="#8a5c10" stroke-width="0.800"/><rect x="280.300" y="963" width="3" height="3" fill="#f2c050" stroke="#c08820" stroke-width="0.700"/><circle cx="407.700" cy="965.800" r="5.200" fill="#f4f8fa" stroke="#8a9298" stroke-width="1.300"/><rect x="405" y="962.500" width="4.500" height="5.500" fill="none" stroke="#9aa" stroke-width="0.800"/><path d="M411.600,969.800 L415.800,974" stroke="#6c6c6c" stroke-width="2.300" stroke-linecap="round"/><circle cx="430.800" cy="965.800" r="5.200" fill="#f4f8fa" stroke="#8a9298" stroke-width="1.300"/><rect x="427.800" y="963" width="6" height="5" fill="none" stroke="#9aa" stroke-width="0.800"/><path d="M434.700,969.800 L439,974" stroke="#6c6c6c" stroke-width="2.300" stroke-linecap="round"/><path d="M448,965.500 h4.600 l-2.300,3 Z" fill="#333"/><polygon points="460,965 463.500,962 474,962 470.500,965" fill="#fff4a0" stroke="#555" stroke-width="0.700"/><polygon points="460,965 470.500,965 470.500,973.700 460,973.700" fill="#f8d820" stroke="#555" stroke-width="0.700"/><polygon points="470.500,965 474,962 474,970.500 470.500,973.700" fill="#c8a810" stroke="#555" stroke-width="0.700"/><circle cx="475.500" cy="966" r="1" fill="#c03030"/><path d="M483,965.500 h4.600 l-2.300,3 Z" fill="#333"/><polygon points="494.500,964 499,960.500 508,960.500 505,964" fill="#9cc4f0" stroke="#2a5a9a" stroke-width="0.700"/><polygon points="494.500,964 505,964 505,976 494.500,976" fill="#3c84d8" stroke="#2a5a9a" stroke-width="0.700"/></svg>
<svg style="left:500px;top:957px" width="589" height="20" viewBox="500 957 589 20"><rect x="722" y="958" width="138" height="19" fill="#d4d4d4"/><rect x="861" y="958" width="181" height="19" fill="#d4d4d4"/><rect x="860" y="958" width="1.500" height="19" fill="#9a9a9a"/><polygon points="494.500,964 505,964 505,976 494.500,976" fill="#3c84d8"/><polygon points="505,964 508.500,960.500 508.500,972 505,976" fill="#1c5cb0"/><rect x="532" y="968" width="7" height="7" fill="#333"/><rect x="534" y="971" width="3" height="4" fill="#ddd"/><polygon points="558,969 571,969 568,976 558,976" fill="#4a7cc8" stroke="#2a4a8a" stroke-width="0.600"/><ellipse cx="592" cy="970" rx="2.500" ry="3.500" fill="#e8f4f4" stroke="#6a9a9a" stroke-width="0.800"/><ellipse cx="599" cy="970" rx="2.500" ry="3.500" fill="#e8f4f4" stroke="#6a9a9a" stroke-width="0.800"/><polygon points="621,968.500 636,968.500 632,976 621,976" fill="#2a6cc8" stroke="#1a3a7a" stroke-width="0.600"/><path d="M657,968 l4,6 l-1.500,0 l1,2" fill="none" stroke="#888" stroke-width="0.800"/><path d="M682,968 l5,7 M686,968 l-2,3 l3,0" fill="none" stroke="#222" stroke-width="1.200"/><path d="M706,968 l3,5 l-1.500,0 l1,2" fill="none" stroke="#999" stroke-width="0.800"/><path d="M853,965 h4 l-2,2.500 Z" fill="#9a9a9a"/><path d="M1035,965 h4 l-2,2.500 Z" fill="#9a9a9a"/><rect x="1046.500" y="969.500" width="5.500" height="5.500" fill="#6a8cd0" stroke="#3a5a9a" stroke-width="0.700"/><rect x="1055.500" y="969.500" width="5.500" height="5.500" fill="#f0d040" stroke="#a08820" stroke-width="0.700"/><rect x="1078" y="967" width="2" height="2" fill="#8a8a8a"/><rect x="1074" y="971" width="2" height="2" fill="#8a8a8a"/><rect x="1078" y="971" width="2" height="2" fill="#8a8a8a"/><rect x="1070" y="975" width="2" height="2" fill="#8a8a8a"/><rect x="1074" y="975" width="2" height="2" fill="#8a8a8a"/><rect x="1078" y="975" width="2" height="2" fill="#8a8a8a"/></svg>
<span id="t68" class="t" style="left:724.0px;top:957.5px;font-size:14px;line-height:20px;color:#b4b4b4;">任意</span>
<span id="t69" class="t" style="left:864.0px;top:957.5px;font-size:14px;line-height:20px;color:#b4b4b4;transform:scaleX(0.8566);">Default</span>
<div class="a" style="left:501px;top:698px;width:581px;height:270px;background:#f0f0f0;border-radius:3px 4px 4px 6px;box-shadow:0 0 0 1px rgba(120,120,120,0.55), 0 2px 8px rgba(0,0,0,0.35);overflow:hidden"><div class="a" style="left:0;top:0;width:581px;height:30px;background:#fff"></div><div class="a" style="left:561px;top:7px;width:19px;height:19px;background:#c75050"></div><div class="a" style="left:149px;top:32px;width:1px;height:50px;background:#8a8a8a"></div><div class="a" style="left:469px;top:32px;width:1px;height:50px;background:#8a8a8a"></div><div class="a" style="left:28px;top:84px;width:553px;height:25px;background:#404040"></div><div class="a" style="left:28px;top:109px;width:150px;height:32px;background:#700000"></div><div class="a" style="left:178px;top:109px;width:403px;height:32px;background:#400000"></div><div class="a" style="left:28px;top:141px;width:553px;height:86px;background:#d9d9d9"></div><div class="a" style="left:0;top:243px;width:581px;height:1px;background:#dcdcdc"></div></div>
<span id="t70" class="t" style="left:509.2px;top:704.9px;font-size:12px;line-height:17px;color:#111;transform:scaleX(0.9185);">Scene1 - RSSequencer</span>
<span id="t71" class="t" style="left:1067.8px;top:705.8px;font-size:12px;line-height:17px;color:#fff;font-weight:bold;transform:scaleX(1.1065);">x</span>
<span id="t72" class="t" style="left:506.0px;top:764.5px;font-size:12px;line-height:17px;color:#9a9a9a;transform:scaleX(0.8094);">ロボットを登録</span>
<span id="t73" class="t" style="left:585.0px;top:764.5px;font-size:12px;line-height:17px;color:#9a9a9a;transform:scaleX(0.9498);">要素を登録</span>
<span id="t74" class="t" style="left:658.7px;top:764.5px;font-size:12px;line-height:17px;color:#9a9a9a;transform:scaleX(1.0099);">Joint Angle</span>
<span id="t75" class="t" style="left:729.6px;top:764.5px;font-size:12px;line-height:17px;color:#111;transform:scaleX(0.9626);">End Point</span>
<span id="t76" class="t" style="left:791.0px;top:764.5px;font-size:12px;line-height:17px;color:#111;">Arc Point</span>
<span id="t77" class="t" style="left:851.3px;top:764.5px;font-size:12px;line-height:17px;color:#9a9a9a;transform:scaleX(0.9531);">Tool Path</span>
<span id="t78" class="t" style="left:911.0px;top:764.5px;font-size:12px;line-height:17px;color:#111;transform:scaleX(0.7012);">カメラワーク</span>
<span id="t79" class="t" style="left:981.7px;top:764.5px;font-size:12px;line-height:17px;color:#111;transform:scaleX(0.9411);">設定</span>
<span id="t80" class="t" style="left:1020.7px;top:764.5px;font-size:12px;line-height:17px;color:#9a9a9a;transform:scaleX(0.9411);">録画</span>
<span id="t81" class="t" style="left:1057.7px;top:764.5px;font-size:12px;line-height:17px;color:#9a9a9a;transform:scaleX(0.9369);">画面</span>
<span class="t" style="left:680.3px;top:732.4px;line-height:28px;color:#111;text-shadow:1.5px 1.5px 2px rgba(0,0,0,0.38);transform:scaleX(0.88)"><span style="font-size:13px">j</span><span style="font-size:22px">A</span></span>
<span class="t" style="left:744.0px;top:732.4px;line-height:28px;color:#ff0000;text-shadow:1.5px 1.5px 2px rgba(0,0,0,0.38);transform:scaleX(0.88)"><span style="font-size:13px">e</span><span style="font-size:22px">P</span></span>
<span class="t" style="left:805.4px;top:732.4px;line-height:28px;color:#0000ff;text-shadow:1.5px 1.5px 2px rgba(0,0,0,0.38);transform:scaleX(0.88)"><span style="font-size:13px">a</span><span style="font-size:22px">P</span></span>
<span class="t" style="left:865.2px;top:732.4px;line-height:28px;color:#333;text-shadow:1.5px 1.5px 2px rgba(0,0,0,0.38);transform:scaleX(0.90)"><span style="font-size:13px">t</span><span style="font-size:22px">P</span></span>
<span id="t82" class="t" style="left:558.4px;top:783.1px;font-size:17px;line-height:24px;color:#fff;transform:scaleX(0.9329);">00:00:02.000</span>
<span id="t83" class="t" style="left:692.2px;top:783.0px;font-size:11px;line-height:15px;color:#fff;transform:scaleX(0.9699);">00:00:00.000</span>
<span id="t84" class="t" style="left:792.2px;top:783.0px;font-size:11px;line-height:15px;color:#fff;transform:scaleX(0.9699);">00:00:01.000</span>
<span id="t85" class="t" style="left:892.2px;top:783.0px;font-size:11px;line-height:15px;color:#fff;transform:scaleX(0.9699);">00:00:02.000</span>
<span id="t86" class="t" style="left:992.2px;top:783.0px;font-size:11px;line-height:15px;color:#fff;transform:scaleX(0.9699);">00:00:03.000</span>
<svg style="left:529px;top:782px" width="553" height="25"><rect x="163" y="14" width="1" height="11" fill="#fff"/><rect x="173" y="22" width="1" height="3" fill="#fff"/><rect x="183" y="22" width="1" height="3" fill="#fff"/><rect x="193" y="22" width="1" height="3" fill="#fff"/><rect x="203" y="22" width="1" height="3" fill="#fff"/><rect x="213" y="19" width="1" height="6" fill="#fff"/><rect x="223" y="22" width="1" height="3" fill="#fff"/><rect x="233" y="22" width="1" height="3" fill="#fff"/><rect x="243" y="22" width="1" height="3" fill="#fff"/><rect x="253" y="22" width="1" height="3" fill="#fff"/><rect x="263" y="14" width="1" height="11" fill="#fff"/><rect x="273" y="22" width="1" height="3" fill="#fff"/><rect x="283" y="22" width="1" height="3" fill="#fff"/><rect x="293" y="22" width="1" height="3" fill="#fff"/><rect x="303" y="22" width="1" height="3" fill="#fff"/><rect x="313" y="19" width="1" height="6" fill="#fff"/><rect x="323" y="22" width="1" height="3" fill="#fff"/><rect x="333" y="22" width="1" height="3" fill="#fff"/><rect x="343" y="22" width="1" height="3" fill="#fff"/><rect x="353" y="22" width="1" height="3" fill="#fff"/><rect x="363" y="14" width="1" height="11" fill="#fff"/><rect x="373" y="22" width="1" height="3" fill="#fff"/><rect x="383" y="22" width="1" height="3" fill="#fff"/><rect x="393" y="22" width="1" height="3" fill="#fff"/><rect x="403" y="22" width="1" height="3" fill="#fff"/><rect x="413" y="19" width="1" height="6" fill="#fff"/><rect x="423" y="22" width="1" height="3" fill="#fff"/><rect x="433" y="22" width="1" height="3" fill="#fff"/><rect x="443" y="22" width="1" height="3" fill="#fff"/><rect x="453" y="22" width="1" height="3" fill="#fff"/><rect x="463" y="14" width="1" height="11" fill="#fff"/><rect x="473" y="22" width="1" height="3" fill="#fff"/><rect x="483" y="22" width="1" height="3" fill="#fff"/><rect x="493" y="22" width="1" height="3" fill="#fff"/><rect x="503" y="22" width="1" height="3" fill="#fff"/><rect x="513" y="19" width="1" height="6" fill="#fff"/><rect x="523" y="22" width="1" height="3" fill="#fff"/><rect x="533" y="22" width="1" height="3" fill="#fff"/><rect x="543" y="22" width="1" height="3" fill="#fff"/></svg>
<span id="t87" class="t" style="left:533.6px;top:810.0px;font-size:13px;line-height:18px;color:#fff;transform:scaleX(0.8593);">Element: パーツ6</span>
<svg style="left:529px;top:807px" width="553" height="32" viewBox="529 807 553 32"><line x1="692.500" y1="807" x2="692.500" y2="839" stroke="#ff0000" stroke-width="1"/><line x1="792.500" y1="807" x2="792.500" y2="839" stroke="#ff0000" stroke-width="1"/><line x1="700" y1="823.500" x2="785" y2="823.500" stroke="#8a7070" stroke-width="1"/><circle cx="692.300" cy="823.300" r="7.700" fill="#fdeeee"/><circle cx="792.300" cy="823.300" r="7.700" fill="#fdeeee"/></svg>
<span id="t88" class="t" style="left:688.3px;top:814.5px;font-size:13px;line-height:18px;color:#e00000;transform:scaleX(0.9225);">P</span>
<span id="t89" class="t" style="left:788.3px;top:814.5px;font-size:13px;line-height:18px;color:#e00000;transform:scaleX(0.9225);">P</span>
<span id="t90" class="t" style="left:715.4px;top:817.6px;font-size:11px;line-height:15px;color:#c8b8b8;transform:scaleX(0.9757);">144.3mm/s</span>
<div class="a" style="left:504.5px;top:807.5px;width:24.5px;height:24.5px;background:#dadada;border-radius:3px 0 0 3px;box-shadow:0 1.5px 1px rgba(0,0,0,0.45), -0.5px 0 0 rgba(0,0,0,0.12)"></div>
<span id="t91" class="t" style="left:511.5px;top:812.8px;font-size:11px;line-height:15px;color:#808080;transform:scaleX(0.9600);">#D</span>
<div class="a" style="left:506.5px;top:834.0px;width:22.5px;height:20.5px;background:#f1f1f1;border-radius:3px 0 0 3px;box-shadow:0 1.5px 1px rgba(0,0,0,0.45), -0.5px 0 0 rgba(0,0,0,0.12)"></div>
<span id="t92" class="t" style="left:511.0px;top:837.2px;font-size:11px;line-height:15px;color:#808080;transform:scaleX(1.1429);">#2</span>
<div class="a" style="left:506.5px;top:857.5px;width:22.5px;height:20.5px;background:#f1f1f1;border-radius:3px 0 0 3px;box-shadow:0 1.5px 1px rgba(0,0,0,0.45), -0.5px 0 0 rgba(0,0,0,0.12)"></div>
<span id="t93" class="t" style="left:511.0px;top:860.8px;font-size:11px;line-height:15px;color:#808080;transform:scaleX(1.1429);">#3</span>
<div class="a" style="left:506.5px;top:881.5px;width:22.5px;height:20.5px;background:#f1f1f1;border-radius:3px 0 0 3px;box-shadow:0 1.5px 1px rgba(0,0,0,0.45), -0.5px 0 0 rgba(0,0,0,0.12)"></div>
<span id="t94" class="t" style="left:511.0px;top:884.8px;font-size:11px;line-height:15px;color:#808080;transform:scaleX(1.1429);">#4</span>
<div class="a" style="left:506.5px;top:905.5px;width:22.5px;height:20.5px;background:#f1f1f1;border-radius:3px 0 0 3px;box-shadow:0 1.5px 1px rgba(0,0,0,0.45), -0.5px 0 0 rgba(0,0,0,0.12)"></div>
<span id="t95" class="t" style="left:511.0px;top:908.8px;font-size:11px;line-height:15px;color:#808080;transform:scaleX(1.1429);">#5</span>
<div class="a" style="left:506.5px;top:929.5px;width:22.5px;height:20.5px;background:#f1f1f1;border-radius:3px 0 0 3px;box-shadow:0 1.5px 1px rgba(0,0,0,0.45), -0.5px 0 0 rgba(0,0,0,0.12)"></div>
<span id="t96" class="t" style="left:511.0px;top:932.8px;font-size:11px;line-height:15px;color:#808080;transform:scaleX(1.1429);">#6</span>
<div class="a" style="left:529px;top:925px;width:553px;height:17px;background:#f0f0f0"></div>
<div class="a" style="left:546px;top:933px;width:415px;height:2px;background:#6e6e6e"></div>
<div class="a" style="left:501px;top:942px;width:581px;height:26px;background:#f0f0f0;border-radius:0 0 4px 6px;border-top:1px solid #e2e2e2;box-sizing:border-box"></div>
<div class="a" style="left:668px;top:944px;width:1px;height:22px;background:#dadada"></div>
<div class="a" style="left:776px;top:944px;width:1px;height:22px;background:#dadada"></div>
<div class="a" style="left:904px;top:944px;width:1px;height:22px;background:#dadada"></div>
<span id="t97" class="t" style="left:528.0px;top:948.5px;font-size:12px;line-height:17px;color:#111;transform:scaleX(0.8568);clip-path:inset(0 2px 0 0);">イベントを挿入: 1, EndPoint F</span>
<div class="a" style="left:892px;top:782px;width:1px;height:143px;background:#ff0000"></div>
<div class="a" style="left:758px;top:776px;width:92px;height:74px;border:5.5px solid #ed1c24;box-sizing:border-box"></div>
<svg style="left:905px;top:943px" width="177" height="26" viewBox="905 943 177 26"><circle cx="917.600" cy="955" r="7.500" fill="#fafafa" stroke="#8c8c8c" stroke-width="1"/><rect x="913.500" y="954" width="8.500" height="2.400" fill="#444"/><circle cx="1048" cy="955" r="7.500" fill="#fafafa" stroke="#8c8c8c" stroke-width="1"/><rect x="1043.800" y="954" width="8.500" height="2.200" fill="#444"/><rect x="1047" y="950.800" width="2.200" height="8.500" fill="#444"/><rect x="940" y="951.500" width="90" height="3" fill="#e7eaea" stroke="#d0d0d0" stroke-width="0.800"/><path d="M997,947 L1006,947 L1006,957.500 L1001.500,962 L997,957.500 Z" fill="#0078d7"/><rect x="944.6" y="964" width="0.800" height="4" fill="#999"/><rect x="952.6" y="964" width="0.800" height="3" fill="#999"/><rect x="960.7" y="964" width="0.800" height="3" fill="#999"/><rect x="968.7" y="964" width="0.800" height="3" fill="#999"/><rect x="976.8" y="964" width="0.800" height="3" fill="#999"/><rect x="984.8" y="964" width="0.800" height="3" fill="#999"/><rect x="992.8" y="964" width="0.800" height="3" fill="#999"/><rect x="1000.9" y="964" width="0.800" height="3" fill="#999"/><rect x="1008.9" y="964" width="0.800" height="3" fill="#999"/><rect x="1017.0" y="964" width="0.800" height="3" fill="#999"/><rect x="1025.0" y="964" width="0.800" height="4" fill="#999"/></svg>
<svg style="left:501px;top:728px;filter:drop-shadow(1.500px 1.500px 1.200px rgba(0,0,0,0.45))" width="581" height="54" viewBox="501 728 581 54"><path d="M532,735 L547,736" stroke="#2c2c2c" stroke-width="3.400" stroke-linecap="round"/><path d="M533,734.800 L545,735.600" stroke="#7a7a7a" stroke-width="1.200" stroke-linecap="round"/><path d="M547,736 L537.600,747.600" stroke="#2c2c2c" stroke-width="4" stroke-linecap="round"/><path d="M545.500,738 L539,746" stroke="#666" stroke-width="1.400" stroke-linecap="round"/><path d="M537.600,747.600 L540.600,753.500" stroke="#1c1c1c" stroke-width="3.200"/><circle cx="547" cy="736" r="2.200" fill="#0c0c0c"/><circle cx="537.600" cy="747.600" r="2.400" fill="#0c0c0c"/><path d="M536.200,751.800 H539.800 V754.500 H546 V760.200 H536.200 Z" fill="#0c0c0c"/><rect x="541.800" y="756" width="2.200" height="1.600" fill="#c8c8c8"/><rect x="540" y="755.500" width="0.800" height="4" fill="#999"/><polygon points="613.100,736.300 623,741.200 613.100,746.200 603.500,741.200" fill="#474747"/><polygon points="603.500,741.200 613.100,746.200 613.100,758 604,752.800" fill="#565656"/><polygon points="613.100,746.200 623,741.200 622.500,752.800 613.100,758" fill="#4e4e4e"/><path d="M603.500,741.200 L613.100,746.200 L623,741.200 M613.100,746.200 V758" stroke="#7a7a7a" stroke-width="0.600" fill="none"/><g transform="rotate(-6 936 746)"><rect x="927.300" y="740.600" width="18" height="12.200" rx="1" fill="#0a0a0a"/><rect x="929.500" y="738.600" width="6.500" height="3" fill="#0a0a0a"/><circle cx="936" cy="746.600" r="3.900" fill="#f4f4f4"/><circle cx="936" cy="746.600" r="2" fill="#0a0a0a"/></g><path d="M943,734.600 Q949.500,736 949.300,744.500" fill="none" stroke="#0a0a0a" stroke-width="1.300"/><path d="M946.800,743 L949.400,746.800 L951.400,742.600 Z" fill="#0a0a0a"/><path d="M922.300,753.500 Q925,758.500 932.500,758" fill="none" stroke="#0a0a0a" stroke-width="1.300"/><path d="M931.500,755.800 L935.200,758 L931.500,760.200 Z" fill="#0a0a0a"/><path d="M921.200,755.800 L922,751.800 L925,754.300 Z" fill="#0a0a0a"/><path d="M992.87,746.60 L994.91,746.63 L994.91,748.97 L992.87,749.00 L992.14,750.75 L993.57,752.21 L991.91,753.87 L990.45,752.44 L988.70,753.17 L988.67,755.21 L986.33,755.21 L986.30,753.17 L984.55,752.44 L983.09,753.87 L981.43,752.21 L982.86,750.75 L982.13,749.00 L980.09,748.97 L980.09,746.63 L982.13,746.60 L982.86,744.85 L981.43,743.39 L983.09,741.73 L984.55,743.16 L986.30,742.43 L986.33,740.39 L988.67,740.39 L988.70,742.43 L990.45,743.16 L991.91,741.73 L993.57,743.39 L992.14,744.85 Z M984.70,747.80 a2.80,2.80 0 1 0 5.60,0 a2.80,2.80 0 1 0 -5.60,0 Z" fill="#0a0a0a" fill-rule="evenodd"/><path d="M1004.51,741.27 L1006.03,741.27 L1006.03,742.93 L1004.51,742.93 L1004.01,744.14 L1005.09,745.22 L1003.92,746.39 L1002.84,745.31 L1001.63,745.81 L1001.63,747.33 L999.97,747.33 L999.97,745.81 L998.76,745.31 L997.68,746.39 L996.51,745.22 L997.59,744.14 L997.09,742.93 L995.57,742.93 L995.57,741.27 L997.09,741.27 L997.59,740.06 L996.51,738.98 L997.68,737.81 L998.76,738.89 L999.97,738.39 L999.97,736.87 L1001.63,736.87 L1001.63,738.39 L1002.84,738.89 L1003.92,737.81 L1005.09,738.98 L1004.01,740.06 Z M999.00,742.10 a1.80,1.80 0 1 0 3.60,0 a1.80,1.80 0 1 0 -3.60,0 Z" fill="#0a0a0a" fill-rule="evenodd"/><rect x="1022" y="745.200" width="20.200" height="9.600" rx="0.600" fill="#050505"/><polygon points="1022,739.500 1040.300,735.400 1041.300,738.400 1042.200,738.600 1042.200,743.400 1022,743.400" fill="#050505"/><path d="M1026.2,738.6 l1.700,-0.400 l1.300,2.300 l-1.700,0.400 Z" fill="#e8e8e8"/><path d="M1027.0,742 l1.500,0 l-0.800,1.400 l-1.500,0 Z" fill="#e8e8e8"/><path d="M1030.3,737.7 l1.700,-0.400 l1.300,2.300 l-1.700,0.400 Z" fill="#e8e8e8"/><path d="M1031.1,742 l1.500,0 l-0.800,1.400 l-1.500,0 Z" fill="#e8e8e8"/><path d="M1034.4,736.8 l1.700,-0.400 l1.300,2.300 l-1.700,0.400 Z" fill="#e8e8e8"/><path d="M1035.2,742 l1.500,0 l-0.800,1.400 l-1.500,0 Z" fill="#e8e8e8"/><path d="M1038.5,735.8 l1.700,-0.400 l1.300,2.300 l-1.700,0.400 Z" fill="#e8e8e8"/><path d="M1039.3,742 l1.500,0 l-0.800,1.400 l-1.500,0 Z" fill="#e8e8e8"/><path d="M1078.300,738 L1082,736.300 V756 L1078.300,755 Z" fill="#050505"/></svg>
<svg style="left:506px;top:947px" width="17" height="17" viewBox="0 0 17 17"><circle cx="8.500" cy="8.500" r="7.300" fill="#fafafa" stroke="#7d7d7d" stroke-width="1"/></svg>
<span id="t98" class="t" style="left:510.6px;top:949.0px;font-size:10px;line-height:14px;color:#555;transform:scaleX(0.9588);">M</span>
<svg style="left:1068px;top:954px" width="13" height="13" viewBox="0 0 13 13"><rect x="9" y="1" width="2" height="2" fill="#b4b4b4"/><rect x="5" y="5" width="2" height="2" fill="#b4b4b4"/><rect x="9" y="5" width="2" height="2" fill="#b4b4b4"/><rect x="1" y="9" width="2" height="2" fill="#b4b4b4"/><rect x="5" y="9" width="2" height="2" fill="#b4b4b4"/><rect x="9" y="9" width="2" height="2" fill="#b4b4b4"/></svg>
</body></html>
